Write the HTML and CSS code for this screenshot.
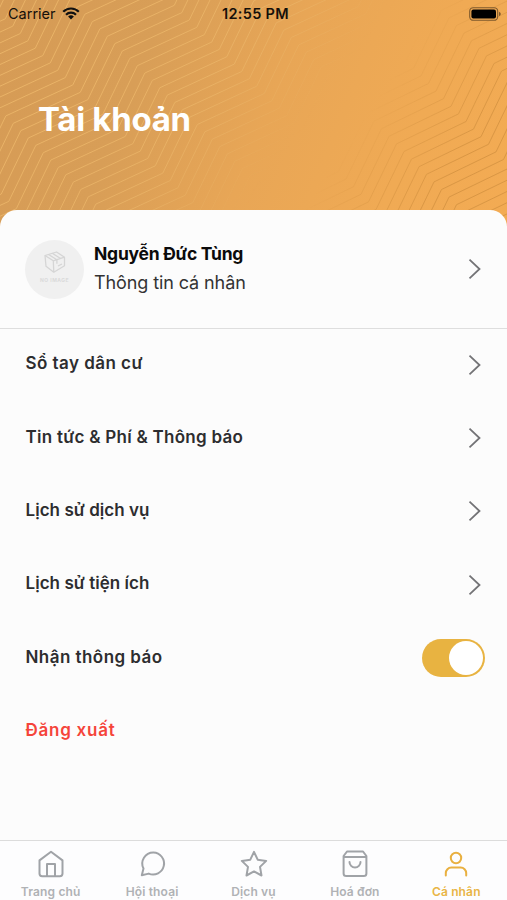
FILE: index.html
```html
<!DOCTYPE html>
<html lang="vi">
<head>
<meta charset="utf-8">
<title>Tài khoản</title>
<link rel="stylesheet" href="styles.css">
</head>
<body>
<svg width="0" height="0" class="defs">
  <symbol id="chevron" viewBox="0 0 14 22"><path d="M1.500 1.700 11.500 11 1.500 20.300" fill="none" stroke="#737376" stroke-width="1.8"/></symbol>
</svg>
<div class="screen">
  <header class="hero">
    <svg class="pattern" width="507" height="230" viewBox="0 0 507 230">
      <defs>
        <linearGradient id="fadeLight" gradientUnits="userSpaceOnUse" x1="90" y1="60" x2="262" y2="185">
          <stop offset="0" stop-color="#fff" stop-opacity=".85"/><stop offset=".55" stop-color="#fff" stop-opacity=".7"/><stop offset="1" stop-color="#fff" stop-opacity="0"/>
        </linearGradient>
        <linearGradient id="fadeDark" gradientUnits="userSpaceOnUse" x1="370" y1="110" x2="455" y2="165">
          <stop offset="0" stop-color="#fff" stop-opacity="0"/><stop offset="1" stop-color="#fff"/>
        </linearGradient>
        <mask id="maskLight" maskUnits="userSpaceOnUse" x="0" y="0" width="507" height="230"><rect width="507" height="230" fill="url(#fadeLight)"/></mask>
        <mask id="maskDark" maskUnits="userSpaceOnUse" x="0" y="0" width="507" height="230"><rect width="507" height="230" fill="url(#fadeDark)"/></mask>
      </defs>
      <g mask="url(#maskLight)"><path id="light" class="line-light"/></g>
      <g mask="url(#maskDark)"><path id="dark" class="line-dark"/></g>
    </svg>
    <div class="status">
      <div class="carrier"><span>Carrier</span>
        <svg width="18" height="13" viewBox="0 0 18 13"><g fill="none" stroke="#111" stroke-width="2.1"><path d="M1.2 4.7a11 11 0 0 1 15.6 0"/><path d="M4 7.7a7 7 0 0 1 10 0"/></g><path d="M9 12.4 6.1 9.6a4.1 4.1 0 0 1 5.800 0Z" fill="#111"/></svg>
      </div>
      <time>12:55 PM</time>
      <svg class="battery" width="32" height="14" viewBox="0 0 32 14"><rect x=".7" y=".7" width="28" height="12.600" rx="3.600" fill="none" stroke="#7e592d" stroke-width="1.1"/><rect x="2.400" y="2.400" width="24.600" height="9.200" rx="2" fill="#000"/><path d="M30 4.700q1.800 .7 1.800 2.300t-1.800 2.300Z" fill="#7e592d"/></svg>
    </div>
    <h1>Tài khoản</h1>
  </header>
  <main class="sheet">
    <section class="profile">
      <div class="avatar">
        <svg width="24" height="23" viewBox="0 0 24 23" fill="none" stroke="#d5d5d5" stroke-width="1.3" stroke-linejoin="round"><path d="M2 4.500 13.500 1l8 5.200v8.600l-10.700 6.400L3 15.300Z"/><path d="m2 4.500 8.300 5.300 11.200-3.600M10.300 9.800l.5 11.400M5.500 3.500l8.400 5.200v4M9.300 2.300l8.300 5.200M15 15l4-2"/></svg>
        <span>NO IMAGE</span>
      </div>
      <div class="who"><strong>Nguyễn Đức Tùng</strong><span>Thông tin cá nhân</span></div>
      <svg class="chev"><use href="#chevron"/></svg>
    </section>
    <nav class="menu">
      <a class="row"><span class="wide">Sổ tay dân cư</span><svg class="chev"><use href="#chevron"/></svg></a>
      <a class="row"><span class="loose">Tin tức &amp; Phí &amp; Thông báo</span><svg class="chev"><use href="#chevron"/></svg></a>
      <a class="row"><span>Lịch sử dịch vụ</span><svg class="chev"><use href="#chevron"/></svg></a>
      <a class="row"><span>Lịch sử tiện ích</span><svg class="chev"><use href="#chevron"/></svg></a>
      <div class="row"><span class="wide">Nhận thông báo</span><i class="switch"><b></b></i></div>
      <a class="row logout"><span>Đăng xuất</span></a>
    </nav>
  </main>
  <footer class="tabs">
    <a><svg viewBox="0 0 28 28"><path d="M2.500 10.400 14 1.800l11.500 8.600v13.200a2.600 2.600 0 0 1-2.600 2.600H5.100a2.600 2.600 0 0 1-2.600-2.600Z"/><path d="M10 26V14h8v12"/></svg><span>Trang chủ</span></a>
    <a><svg viewBox="0 0 28 28"><path d="M14.400 2.500a11 11 0 1 1-4.700 21.100L2.800 25.200l1.700-6.700A11 11 0 0 1 14.400 2.500Z"/></svg><span>Hội thoại</span></a>
    <a><svg viewBox="0 0 28 28"><path d="m14 1.800 3.700 7.900 8.500 1.200-6.200 6 1.500 8.600-7.500-4.100-7.500 4.100L8 16.900l-6.200-6 8.500-1.200Z"/></svg><span>Dịch vụ</span></a>
    <a><svg viewBox="0 0 28 28"><path d="M6 1.500h16l3.400 4.500v17.500a2.600 2.600 0 0 1-2.600 2.600H5.200a2.600 2.600 0 0 1-2.600-2.600V6ZM2.600 7h22.800M19.500 12a5.500 5.500 0 0 1-11 0"/></svg><span>Hoá đơn</span></a>
    <a class="on"><svg viewBox="0 0 28 28"><circle cx="14" cy="8" r="5.200"/><path d="M3.800 25.500v-2.400a5.500 5.500 0 0 1 5.500-5.500h9.400a5.500 5.500 0 0 1 5.500 5.500v2.400"/></svg><span>Cá nhân</span></a>
  </footer>
</div>
<script src="pattern.js"></script>
</body>
</html>
```
FILE: styles.css
```css
* { box-sizing: border-box; margin: 0; padding: 0; }
body { font-family: Inter, "Noto Sans", sans-serif; background: #fcfcfc; }
.defs { display: block; position: absolute; }
.screen { width: 507px; height: 900px; display: flex; flex-direction: column; overflow: hidden; }
.hero { position: relative; height: 230px; flex: none; background: linear-gradient(112deg, #d69b55 0%, #d89e57 28%, #e8a656 52%, #f0aa54 78%, #f3ab53 100%); }
.pattern { position: absolute; left: 0; top: 0; }
.line-light { fill: none; stroke: #ecb76b; stroke-width: 1; }
.line-dark { fill: none; stroke: #d69443; stroke-width: .9; }
.status { position: relative; display: grid; grid-template-columns: 1fr auto 1fr; align-items: center; height: 27px; padding: 0 6px 0 8px; color: #15100a; font-size: 14.500px; }
.carrier { display: flex; align-items: center; gap: 6px; }
.status time { font-weight: 600; letter-spacing: .3px; margin-left: 2px; }
.battery { justify-self: end; }
h1 { position: relative; margin: 71px 0 0 38px; font-size: 33px; line-height: 42px; font-weight: 700; letter-spacing: -.3px; color: #fff; white-space: nowrap; }
.sheet { position: relative; margin-top: -20px; flex: 1; background: #fcfcfc; border-radius: 17px 17px 0 0; }
.profile { display: flex; align-items: center; height: 119px; padding: 0 25px 0 25px; border-bottom: 1px solid #dedede; }
.avatar { width: 59px; height: 59px; border-radius: 50%; background: #f0f0f0; display: flex; flex-direction: column; align-items: center; gap: 3px; padding-top: 11px; }
.avatar span { font-size: 5px; line-height: 7px; font-weight: 700; letter-spacing: .5px; color: #dadada; }
.who { flex: 1; margin: 0 0 2px 10px; display: flex; flex-direction: column; line-height: 29px; font-size: 18px; letter-spacing: -.1px; color: #333; white-space: nowrap; }
.who strong { color: #0b0b0b; font-weight: 700; font-size: 17.500px; letter-spacing: -.25px; }
.chev { width: 14px; height: 22px; flex: none; }
.menu { margin-top: -1px; }
.row { display: flex; align-items: center; justify-content: space-between; height: 73.400px; padding: 0 25px 0 25.500px; font-size: 17px; font-weight: 600; color: #2d2d2f; white-space: nowrap; }
.row span { margin-bottom: 3px; letter-spacing: .05px; }
.row .wide { letter-spacing: .45px; }
.row .loose { letter-spacing: .27px; }
.switch { width: 63px; height: 38px; border-radius: 19px; background: #e8b341; padding: 2px; display: flex; justify-content: flex-end; margin-right: -3px; }
.switch b { width: 34px; height: 34px; border-radius: 50%; background: #fff; }
.logout { color: #f5443a; }
.logout span { letter-spacing: .75px; }
.tabs { height: 60px; flex: none; border-top: 1px solid #dcdcdc; background: #fdfdfe; display: grid; grid-template-columns: repeat(5, 1fr); }
.tabs a { display: flex; flex-direction: column; align-items: center; padding-top: 9px; gap: 5px; color: #b0b2b5; font-size: 12px; line-height: 17px; font-weight: 600; letter-spacing: .15px; white-space: nowrap; }
.tabs svg { width: 28px; height: 28px; margin-left: 1px; fill: none; stroke: #a0a3a7; stroke-width: 2; stroke-linejoin: round; stroke-linecap: round; }
.tabs .on { color: #e9b546; }
.tabs .on svg { margin-left: 0; stroke: #e9b040; }
```
FILE: pattern.js
```js
// Builds parallel zigzag contours: each line alternates a shallow and a steep run.
function contours(x, y, shallow, steep, step, from, to) {
  let d = '';
  for (let i = from; i <= to; i++) {
    let px = x + i * step[0] - 5 * (shallow[0] + steep[0]);
    let py = y + i * step[1] - 5 * (shallow[1] + steep[1]);
    d += 'M' + px + ' ' + py;
    for (let k = 0; k < 10; k++) {
      d += 'l' + shallow.join(' ') + 'l' + steep.join(' ');
    }
  }
  return d;
}
document.getElementById('light').setAttribute('d', contours(13.300, 123.300, [67, -31], [27, -56], [7.500, 7.350], -20, 26));
document.getElementById('dark').setAttribute('d', contours(404, 151.500, [62, -30], [28, -58], [7.500, 7.600], -9, 30));
```
